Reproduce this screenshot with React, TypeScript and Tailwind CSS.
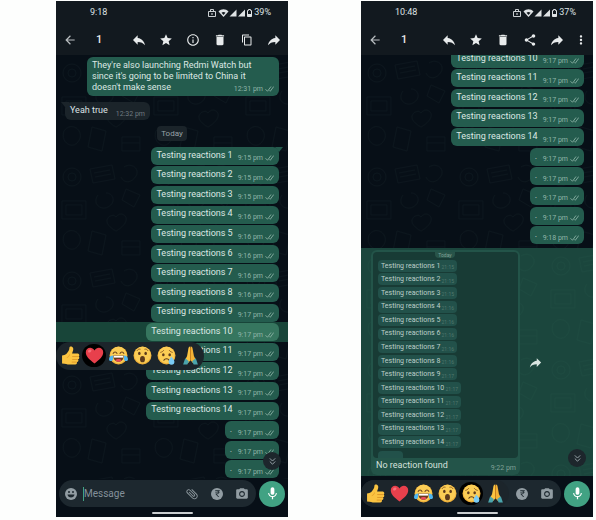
import { useId } from "react";
import type { ReactNode } from "react";
import {
  MdArrowBack, MdReply, MdStar, MdInfoOutline, MdDelete, MdContentCopy, MdShare, MdMoreVert,
  MdAttachFile, MdCameraAlt, MdMic, MdCurrencyRupee,
} from "react-icons/md";

type Message = {
  text: string;
  time: string;
};

const firstChat: Message[] = [
  { text: "Testing reactions 1", time: "9:15 pm" },
  { text: "Testing reactions 2", time: "9:15 pm" },
  { text: "Testing reactions 3", time: "9:15 pm" },
  { text: "Testing reactions 4", time: "9:16 pm" },
  { text: "Testing reactions 5", time: "9:16 pm" },
  { text: "Testing reactions 6", time: "9:16 pm" },
  { text: "Testing reactions 7", time: "9:16 pm" },
  { text: "Testing reactions 8", time: "9:16 pm" },
  { text: "Testing reactions 9", time: "9:17 pm" },
  { text: "Testing reactions 10", time: "9:17 pm" },
  { text: "Testing reactions 11", time: "9:17 pm" },
  { text: "Testing reactions 12", time: "9:17 pm" },
  { text: "Testing reactions 13", time: "9:17 pm" },
  { text: "Testing reactions 14", time: "9:17 pm" },
  { text: ".", time: "9:17 pm" },
  { text: ".", time: "9:17 pm" },
  { text: ".", time: "9:17 pm" },
];

const secondChat: Message[] = [
  { text: "Testing reactions 10", time: "9:17 pm" },
  { text: "Testing reactions 11", time: "9:17 pm" },
  { text: "Testing reactions 12", time: "9:17 pm" },
  { text: "Testing reactions 13", time: "9:17 pm" },
  { text: "Testing reactions 14", time: "9:17 pm" },
  { text: ".", time: "9:17 pm" },
  { text: ".", time: "9:17 pm" },
  { text: ".", time: "9:17 pm" },
  { text: ".", time: "9:17 pm" },
  { text: ".", time: "9:18 pm" },
];

const photoTimes = [
  "21:15", "21:15", "21:15", "21:16", "21:16", "21:16", "21:16",
  "21:16", "21:17", "21:17", "21:17", "21:17", "21:17", "21:17",
];

/* ---------- emoji ---------- */

function Face({ children }: { children: ReactNode }) {
  return (
    <svg viewBox="0 0 36 36" className="size-[19px]">
      <circle cx="18" cy="18" r="17" fill="#efb03a" />
      <circle cx="18" cy="17" r="15.5" fill="#fbcd55" />
      {children}
    </svg>
  );
}

function ThumbsUp() {
  return (
    <svg viewBox="0 0 36 36" className="size-[19px]">
      <path d="M2 18c3-1 6-1 8-3 4-4 6-7 6-12 0-3 6-3 7 1 1 4-1 7-2 10h10c4 0 5 5 2 6 3 1 2 5-1 5.500 2 1 1 5-2 5 1 2 0 4.500-3 4.500H16c-5 0-7-2-14-2z" fill="#fbc441" />
      <path d="M22 20h10M22 25.500h9M21 30.500h8" stroke="#d98f22" strokeWidth="1.500" fill="none" strokeLinecap="round" />
      <path d="M16 16c0 3-2 5-5 6" stroke="#e39c28" strokeWidth="1.500" fill="none" />
    </svg>
  );
}

function Heart() {
  return (
    <svg viewBox="0 0 36 36" className="size-[19px]">
      <path d="M18 33C8 26 1.500 19.500 1.500 12 1.500 3 13 0 18 8.500 23 0 34.500 3 34.500 12 34.500 19.500 28 26 18 33z" fill="#e8404c" />
      <ellipse cx="9" cy="9.500" rx="3.500" ry="2.500" fill="#f7717b" transform="rotate(-30 9 9.500)" />
    </svg>
  );
}

function Joy() {
  return (
    <Face>
      <path d="M8 14c1.500-3.500 5.500-3.500 7 0M21 14c1.500-3.500 5.500-3.500 7 0" stroke="#6b4420" strokeWidth="2.200" fill="none" strokeLinecap="round" />
      <path d="M8 18h20c0 7-4 12-10 12S8 25 8 18z" fill="#6a3a1c" />
      <path d="M9 18.500h18v3.500H9z" fill="#fff" />
      <path d="M12 27c3-3 9-3 12 0-3 4-9 4-12 0z" fill="#e8495a" />
      <path d="M8 18c-5 0-8 3-8 7s6 5 7.500 1zM28 18c5 0 8 3 8 7s-6 5-7.500 1z" fill="#4fb6f0" />
    </Face>
  );
}

function Wow() {
  return (
    <Face>
      <path d="M8 8.500c1-2 3-3 5.500-2.500M28 8.500c-1-2-3-3-5.500-2.500" stroke="#8b5a22" strokeWidth="1.800" fill="none" strokeLinecap="round" />
      <ellipse cx="12" cy="14" rx="2.400" ry="3" fill="#5c3a1c" />
      <ellipse cx="24" cy="14" rx="2.400" ry="3" fill="#5c3a1c" />
      <ellipse cx="18" cy="25" rx="4.600" ry="6" fill="#5c3a1c" />
    </Face>
  );
}

function Cry() {
  return (
    <Face>
      <path d="M7 12c2-.5 4-1.500 5.500-3.500M29 12c-2-.5-4-1.500-5.500-3.500" stroke="#8b5a22" strokeWidth="1.800" fill="none" strokeLinecap="round" />
      <ellipse cx="12" cy="16.500" rx="2.400" ry="3" fill="#5c3a1c" />
      <ellipse cx="24" cy="16.500" rx="2.400" ry="3" fill="#5c3a1c" />
      <path d="M13 27c2-4 8-4 10 0" stroke="#5c3a1c" strokeWidth="2" fill="none" strokeLinecap="round" />
      <path d="M27 20c4 5 6 7 6 10a5.500 5.500 0 0 1-11 0c0-3 3-6 5-10z" fill="#7accf5" />
    </Face>
  );
}

function Pray() {
  return (
    <svg viewBox="0 0 36 36" className="size-[19px]">
      <path d="M17.500 1c-3 0-3.500 3-4 7l-2 11-3 6 5 7 4.500-5z" fill="#fbc441" />
      <path d="M18.500 1c3 0 3.500 3 4 7l2 11 3 6-5 7-4.500-5z" fill="#f3b236" />
      <path d="M18 3v23" stroke="#c9811f" strokeWidth="1.800" />
      <path d="M8 23l7 6-3 6H4zM28 23l-7 6 3 6h8z" fill="#4ba5ad" />
    </svg>
  );
}

function Reactions({ picked }: { picked: string }) {
  const list = [
    { name: "thumbs up", icon: <ThumbsUp /> },
    { name: "heart", icon: <Heart /> },
    { name: "joy", icon: <Joy /> },
    { name: "wow", icon: <Wow /> },
    { name: "cry", icon: <Cry /> },
    { name: "pray", icon: <Pray /> },
  ];
  return (
    <>
      {list.map((r) => (
        <button
          key={r.name}
          type="button"
          aria-label={r.name}
          className={"grid h-[23px] w-6 place-items-center rounded-full " + (r.name === picked ? "bg-black" : "")}
        >
          {r.icon}
        </button>
      ))}
    </>
  );
}

/* ---------- small drawings ---------- */

function Ticks() {
  return (
    <svg viewBox="0 0 18 12" className="h-[6px] w-[9px]" fill="none" stroke="#8fb5a8" strokeWidth="1.700">
      <path d="M1 6.500l4 4 7-9.500M9 9l1.500 1.500 7-9.500" />
    </svg>
  );
}

// faint wallpaper behind the messages
function Doodles({ className }: { className: string }) {
  const id = useId();
  return (
    <svg className={"absolute inset-0 -z-10 size-full " + className} fill="none" stroke="currentColor" aria-hidden="true">
      <pattern id={id} width="92" height="104" patternUnits="userSpaceOnUse">
        <circle cx="16" cy="18" r="9" />
        <circle cx="16" cy="18" r="4" />
        <path d="M34 10l22-4 3 14-22 4zM38 14l16-3M39 18l16-3" />
        <path d="M68 8c8-5 16 2 12 9s-12 8-15 1M70 30l14 6-6 12-12-7z" />
        <path d="M6 42h24v18H6zM10 46h16v10H10z" />
        <path d="M42 36c-6 8 2 16 10 12s6-14-2-14M60 58c4-6 12-2 10 4s-10 10-10 10-8-4-9-9 6-9 9-5z" />
        <path d="M8 76c6-8 14-4 16 2s-4 14-10 12-8-8-6-14M36 72l-4 20 14 4 4-20zM66 82h18v14H66zM66 88h18" />
      </pattern>
      <rect width="100%" height="100%" fill={`url(#${id})`} stroke="none" />
    </svg>
  );
}

function StatusBar({ time, battery }: { time: string; battery: string }) {
  return (
    <div className="flex h-6 items-center justify-between pr-[17px] pl-[34px] text-[9px] text-[#dfe3e5]">
      <span>{time}</span>
      <div className="flex items-center gap-px">
        <svg viewBox="0 0 45 10" className="h-[10px] w-[45px]" fill="#dfe3e5">
          <path d="M.5 3.500h7v5h-7zM2.500 3.500v-2h3v2" fill="none" stroke="#dfe3e5" strokeWidth=".9" />
          <path d="M3.500 5h1v2h-1z" />
          <path d="M10.500 3.500c2.700-3 7.300-3 10 0L15.500 9z" />
          <path d="M13.500 4.800c1.200-1 2.800-1 4 0l-2 2.200z" fill="#12191f" />
          <path d="M28.500 1.500v7h-7zM37 1.500v7h-7z" />
          <path d="M39.500 2.500h1v-1h2v1h1v6h-4z" fill="none" stroke="#dfe3e5" />
          <path d="M39.500 6h4v2.500h-4z" />
        </svg>
        <span>{battery}</span>
      </div>
    </div>
  );
}

function ToolButton({ label, children }: { label: string; children: ReactNode }) {
  return (
    <button type="button" aria-label={label} className="grid size-4 place-items-center text-[14px]">
      {children}
    </button>
  );
}

/* ---------- chat parts ---------- */

function Bubble({ message, selected, first }: { message: Message; selected?: boolean; first?: boolean }) {
  const isDot = message.text === ".";
  return (
    <div
      className={
        "relative flex h-[18px] items-center rounded-md pr-[5px] pl-[5px] " +
        (selected ? "bg-[#36765f]" : "bg-[#245c4e]")
      }
    >
      {first && (
        <svg viewBox="0 0 8 6" className="absolute top-0 -right-[4px] h-[6px] w-[8px]">
          <path d="M0 0h8L4 5z" fill="#245c4e" />
        </svg>
      )}
      {isDot ? (
        <span className="w-[8px] pb-[2px] text-[9px] leading-[14px] text-[#c7d8d2]">.</span>
      ) : (
        <span className="mr-[5px] mb-px text-[9px] text-[#dde8e4]">{message.text}</span>
      )}
      <span className="mr-[2px] pt-[5px] text-[7px] leading-[10px] text-[#8fb5a8]">{message.time}</span>
      <span className="pt-[5px]"><Ticks /></span>
    </div>
  );
}

function ScrollDown() {
  return (
    <button
      type="button"
      aria-label="Scroll to latest"
      className="absolute right-[7px] bottom-[9px] z-10 grid size-[18px] place-items-center rounded-full bg-[#1d262c]"
    >
      <svg viewBox="0 0 10 10" className="size-[9px]" fill="none" stroke="#a5b0b5">
        <path d="M2 1.500l3 3 3-3M2 5l3 3 3-3" />
      </svg>
    </button>
  );
}

function ComposerTools() {
  return (
    <>
      <button type="button" aria-label="Payment" className="grid size-[12px] place-items-center rounded-full bg-[#929da3] text-[9px] text-[#1d282f]">
        <MdCurrencyRupee />
      </button>
      <button type="button" aria-label="Camera" className="text-[14px] text-[#929da3]">
        <MdCameraAlt />
      </button>
    </>
  );
}

function MicButton() {
  return (
    <button type="button" aria-label="Voice message" className="grid size-[26px] shrink-0 place-items-center rounded-full bg-[#41a283] text-[15px] text-white">
      <MdMic />
    </button>
  );
}

function HomeBar() {
  return (
    <div className="flex h-[10px] items-end justify-center pb-[3px]">
      <div className="h-[2px] w-[41px] rounded-full bg-[#c9cdcf]" />
    </div>
  );
}

function PhoneLeft() {
  return (
    <section className="overflow-hidden bg-[#070f17]">
      <header className="bg-[#12191f]">
        <StatusBar time="9:18" battery="39%" />
        <div className="flex h-[30px] items-center justify-between pr-[6px] pl-[6px] text-[#e8ebec]">
          <div className="flex items-center gap-[18px]">
            <ToolButton label="Back"><MdArrowBack className="text-[#b9bec1]" /></ToolButton>
            <span className="text-[11px] font-medium">1</span>
          </div>
          <div className="flex gap-[11px]">
            <ToolButton label="Reply"><MdReply className="size-4" /></ToolButton>
            <ToolButton label="Star"><MdStar /></ToolButton>
            <ToolButton label="Info"><MdInfoOutline /></ToolButton>
            <ToolButton label="Delete"><MdDelete /></ToolButton>
            <ToolButton label="Copy"><MdContentCopy className="size-3" /></ToolButton>
            <ToolButton label="Forward"><MdReply className="size-4 -scale-x-100" /></ToolButton>
          </div>
        </div>
      </header>

      <div className="relative isolate flex flex-col pt-[2px]">
        <Doodles className="text-[#0c161d]" />
        <div className="mr-[9px] flex w-48 items-end self-end rounded-md bg-[#245c4e] py-[3px] pr-[5px] pl-[5px]">
          <p className="flex-1 text-[9px] leading-[11px] whitespace-nowrap text-[#dde8e4]">
            They're also launching Redmi Watch but<br />
            since it's going to be limited to China it<br />
            doesn't make sense
          </p>
          <span className="-ml-6 flex items-center gap-[2px] text-[7px] leading-[8px] whitespace-nowrap text-[#8fb5a8]">
            12:31 pm <Ticks />
          </span>
        </div>

        <div className="relative mt-[6px] ml-[9px] flex h-[18px] items-center gap-2 self-start rounded-md bg-[#1b242a] px-[5px]">
          <svg viewBox="0 0 8 6" className="absolute top-0 -left-[4px] h-[6px] w-[8px]">
            <path d="M0 0h8v5H4z" fill="#1b242a" />
          </svg>
          <span className="mb-px text-[9px] text-[#dde2e4]">Yeah true</span>
          <span className="pt-[6px] text-[7px] leading-[8px] text-[#6f7a80]">12:32 pm</span>
        </div>

        <div className="mt-[6px] grid h-[15px] w-[30px] place-items-center self-center rounded bg-[#1b242a] text-[8px] text-[#98a2a7]">
          Today
        </div>

        <div className="mt-[5px] flex h-[333px] flex-col">
          {firstChat.map((m, i) => {
            const selected = m.text === "Testing reactions 10";
            return (
              <div
                key={i}
                className={"relative flex flex-1 items-center justify-end pr-[9px] " + (selected ? "z-10 bg-[#184539]" : "")}
              >
                <Bubble message={m} selected={selected} first={i === 0} />
                {selected && (
                  <div className="absolute top-full left-0 flex h-7 items-center rounded-full bg-[#1c252b] pr-[2px] pl-[2px]">
                    <Reactions picked="heart" />
                  </div>
                )}
              </div>
            );
          })}
        </div>
        <ScrollDown />
      </div>

      <footer className="pt-px">
        <div className="flex items-center gap-[3px] pr-[3px] pl-[3px]">
          <div className="flex h-[27px] min-w-0 flex-1 items-center rounded-full bg-[#1d282f] pr-[7px] pl-[6px]">
            <button type="button" aria-label="Emoji">
              <svg viewBox="0 0 12 12" className="size-3">
                <circle cx="6" cy="6" r="6" fill="#929da3" />
                <circle cx="4" cy="4" r="1" fill="#1d282f" />
                <circle cx="8" cy="4" r="1" fill="#1d282f" />
                <path d="M2.500 6.500h7c-.3 4-6.700 4-7 0z" fill="#1d282f" />
              </svg>
            </button>
            <span className="ml-[6px] h-[14px] w-px bg-[#41a283]" />
            <input
              type="text"
              aria-label="Message"
              placeholder="Message"
              className="min-w-0 flex-1 bg-transparent text-[10px] text-white outline-none placeholder:text-[#84909a]"
            />
            <div className="flex items-center gap-[12px]">
              <button type="button" aria-label="Attach" className="text-[14px] text-[#929da3]">
                <MdAttachFile className="-rotate-45" />
              </button>
              <ComposerTools />
            </div>
          </div>
          <MicButton />
        </div>
        <HomeBar />
      </footer>
    </section>
  );
}

function PhotoMessage() {
  return (
    <div className="ml-[10px] w-[149px] rounded-md bg-[#235449] p-[2px]">
      <div className="flex h-[206px] flex-col overflow-hidden rounded bg-[#183b35] pl-[5px]">
        <div className="ml-[57px] grid h-[6px] w-5 shrink-0 place-items-center rounded-b bg-[#285449] text-[5px] leading-[6px] text-[#7fa096]">
          Today
        </div>
        <div className="mt-px flex h-[190px] shrink-0 flex-col">
          {photoTimes.map((time, i) => (
            <div key={i} className="flex flex-1 items-center">
              <div className={"flex h-3 items-center justify-between rounded bg-[#22514a] px-[3px] " + (i < 9 ? "w-[79px]" : "w-[83px]")}>
                <span className="text-[7px] text-[#bdcfc9]">Testing reactions {i + 1}</span>
                <span className="pt-[3px] text-[5px] leading-[8px] text-[#51786d]">{time}</span>
              </div>
            </div>
          ))}
        </div>
        <div className="mt-[2px] h-3 w-[25px] shrink-0 rounded bg-[#22514a]" />
      </div>
      <div className="flex h-[15px] items-center justify-between pr-[2px] pl-[3px]">
        <span className="text-[9px] text-[#d5e1dd]">No reaction found</span>
        <span className="pt-[5px] text-[7px] leading-[8px] text-[#7fa096]">9:22 pm</span>
      </div>
    </div>
  );
}

function PhoneRight() {
  return (
    <section className="overflow-hidden bg-[#070f17]">
      <header className="bg-[#12191f]">
        <StatusBar time="10:48" battery="37%" />
        <div className="flex h-[30px] items-center justify-between pr-[4px] pl-[6px] text-[#e8ebec]">
          <div className="flex items-center gap-[18px]">
            <ToolButton label="Back"><MdArrowBack className="text-[#b9bec1]" /></ToolButton>
            <span className="text-[11px] font-medium">1</span>
          </div>
          <div className="flex gap-[11px]">
            <ToolButton label="Reply"><MdReply className="size-4" /></ToolButton>
            <ToolButton label="Star"><MdStar /></ToolButton>
            <ToolButton label="Delete"><MdDelete /></ToolButton>
            <ToolButton label="Share"><MdShare /></ToolButton>
            <div className="flex gap-2">
              <ToolButton label="Forward"><MdReply className="size-4 -scale-x-100" /></ToolButton>
              <ToolButton label="More"><MdMoreVert /></ToolButton>
            </div>
          </div>
        </div>
      </header>

      <div className="relative isolate flex h-[193px] flex-col justify-end overflow-hidden pb-[3px]">
        <Doodles className="text-[#0c161d]" />
        <div className="flex h-[196px] shrink-0 flex-col">
          {secondChat.map((m, i) => (
            <div key={i} className="flex flex-1 items-center justify-end pr-[9px]">
              <Bubble message={m} />
            </div>
          ))}
        </div>
      </div>

      <div className="relative isolate flex items-center gap-[8px] bg-[#1b463d] pt-[2px] pb-px">
        <Doodles className="text-[#1d4a40]" />
        <PhotoMessage />
        <button type="button" aria-label="Forward photo" className="text-[15px] text-[#d9e5e1]">
          <MdReply className="-scale-x-100" />
        </button>
        <ScrollDown />
      </div>

      <footer className="pt-[4px]">
        <div className="flex items-center gap-[3px] pr-[3px]">
          <div className="flex h-[27px] min-w-0 flex-1 items-center justify-between rounded-full bg-[#1d282f] pr-[7px]">
            <div className="flex h-[27px] items-center rounded-full bg-[#1c252b] px-[2px]">
              <Reactions picked="cry" />
            </div>
            <div className="flex items-center gap-[12px]">
              <ComposerTools />
            </div>
          </div>
          <MicButton />
        </div>
        <HomeBar />
      </footer>
    </section>
  );
}

export default function App() {
  return (
    <main className="grid min-h-screen grid-cols-2 items-start gap-[73px] bg-[#fdfefd] pt-px pr-[3px] pl-14 font-['Roboto',sans-serif]">
      <PhoneLeft />
      <PhoneRight />
    </main>
  );
}
